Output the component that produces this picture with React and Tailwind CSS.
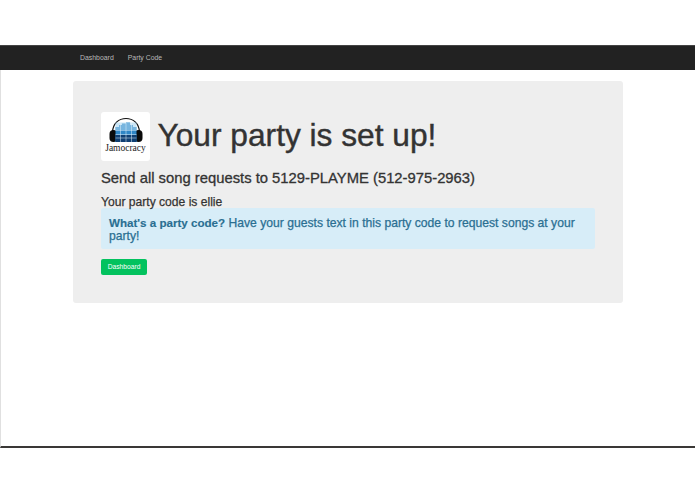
import React from "react";

const Logo = () => (
  <div className="w-[49px] h-[49px] bg-white rounded-[3px] flex flex-col items-center shrink-0">
    <svg width="36" height="27" viewBox="0 0 36 27" className="mt-[5px]">
      <path d="M4.5 15 C5 6 11 1.5 18 1.5 C25 1.5 31 6 31.5 15" fill="none" stroke="#111" strokeWidth="1.2" />
      <rect x="1.5" y="13" width="8" height="12" rx="4" fill="#0b0b0b" />
      <rect x="26.5" y="13" width="8" height="12" rx="4" fill="#0b0b0b" />
      <path d="M7.5 25 V10 H11 V8 H14 V6.5 H18 V5.5 H22 V8 H25 V10 H28.5 V25 Z" fill="#2f86c6" />
      <path d="M7.5 5.5 H28.5 V13 H7.5 Z" fill="#a9d6f0" opacity="0.6" />
      <path d="M7.5 18 H28.5 V25 H7.5 Z" fill="#0f3f73" />
      <path d="M7.5 13.5 H28.5 M7.5 17.5 H28.5 M7.5 21 H28.5 M12.5 6 V25 M18 6 V25 M23.5 6 V25" stroke="#e3f1fa" strokeWidth="0.5" />
    </svg>
    <span className="font-['Liberation_Serif',serif] text-[9.5px] leading-[11px] mt-[-1px] text-[#222]">Jamocracy</span>
  </div>
);

export default function App() {
  return (
    <div className="h-[494px] w-[695px] bg-white font-['Liberation_Sans',Arial,sans-serif] overflow-hidden flex flex-col pt-[45px]">
      <nav className="h-[25px] shrink-0 bg-[#222222] border-t border-[#444] flex items-center pl-[80px] gap-[14px] text-[6.9px] text-[#b8b8b8]">
        <a>Dashboard</a>
        <a>Party Code</a>
      </nav>
      <main className="h-[378px] shrink-0 border-l border-[#e0e0e0] border-b-2 border-b-[#3a3836] pt-[11px] pl-[72px]">
        <div className="w-[550px] h-[222px] bg-[#eeeeee] rounded-[3px] pt-[31px] pl-[28px] pr-[28px] text-[#333333]">
          <div className="flex items-center gap-[7.5px] h-[49px]">
            <Logo />
            <h1 className="text-[31.7px] leading-[44px] font-normal pb-[4px] [-webkit-text-stroke:0.4px_#333333]">Your party is set up!</h1>
          </div>
          <h3 className="text-[14.8px] leading-[18px] mt-[8px] [-webkit-text-stroke:0.3px_#333333]">Send all song requests to 5129-PLAYME (512-975-2963)</h3>
          <h4 className="text-[12.1px] leading-[15px] mt-[8px] [-webkit-text-stroke:0.25px_#333333]">Your party code is ellie</h4>
          <div className="w-[494px] h-[41px] mt-[-2px] bg-[#d7edf8] rounded-[2px] px-[8px] pt-[8px] text-[12.15px] leading-[13px] text-[#2a6f92] [-webkit-text-stroke:0.25px_#2a6f92]">
            <b className="text-[11.6px] [-webkit-text-stroke:0.15px_#2a6f92]">What's a party code?</b> <span>Have your guests text in this party code to request songs at your</span><br /><span>party!</span>
          </div>
          <button className="block mt-[10px] w-[46px] h-[16px] bg-[#03c25e] rounded-[2px] text-white text-[6.7px] leading-[16px] text-center">Dashboard</button>
        </div>
      </main>
    </div>
  );
}
